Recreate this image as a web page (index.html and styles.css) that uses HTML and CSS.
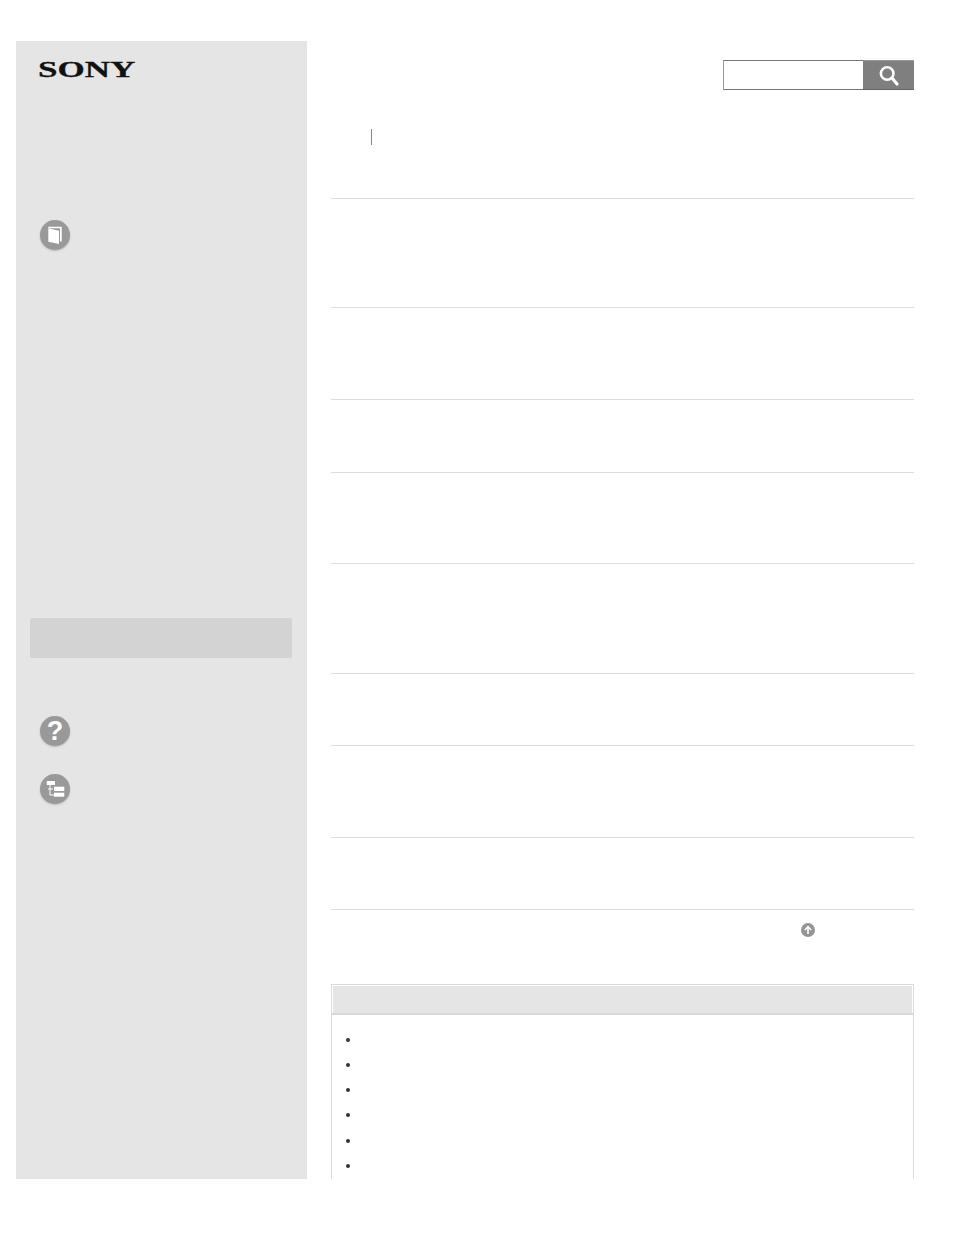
FILE: index.html
```html
<!DOCTYPE html>
<html lang="en">
<head>
<meta charset="utf-8">
<title>Sony Help Guide</title>
<link rel="stylesheet" href="styles.css">
</head>
<body>
<div class="page">
  <aside class="sidebar">
    <div class="logo"><span class="logo-text">SONY</span></div>
    <div class="icon icon-book">
      <svg width="30" height="30" viewBox="0 0 30 30">
        <path class="white" d="M8.3 6.7 H21.7 V21.5 H20 V8.2 H8.3 Z"/>
        <path class="white" d="M8.3 8.3 L19 10.7 V24 L8.3 21.7 Z"/>
      </svg>
    </div>
    <div class="highlight"></div>
    <div class="icon icon-help"><span class="qmark">?</span></div>
    <div class="icon icon-tree">
      <svg width="30" height="30" viewBox="0 0 30 30">
        <rect class="white" x="6.7" y="7" width="8.3" height="4"/>
        <path class="line" d="M10 11 V21 H14 M8 15 H13"/>
        <rect class="white" x="14" y="12.7" width="10.3" height="4.3"/>
        <rect class="white" x="14" y="18.7" width="10.3" height="4"/>
      </svg>
    </div>
  </aside>
  <main class="content">
    <div class="search">
      <div class="search-input"></div>
      <div class="search-btn">
        <svg width="24" height="24" viewBox="0 0 24 24">
          <circle class="lens" cx="10.2" cy="10.5" r="6.3"/>
          <path class="handle" d="M15 15 L20 21"/>
        </svg>
      </div>
    </div>
    <div class="crumbs"><span class="crumb-sep"></span></div>
    <div class="rows">
      <div class="row r109"></div>
      <div class="row r92"></div>
      <div class="row r73"></div>
      <div class="row r91"></div>
      <div class="row r110"></div>
      <div class="row r72"></div>
      <div class="row r92"></div>
      <div class="row r72"></div>
    </div>
    <div class="top-link">
      <svg width="14" height="14" viewBox="0 0 14 14">
        <circle class="top-circle" cx="7" cy="7" r="7"/>
        <path class="top-arrow" d="M7 11 V4 M3.8 7 L7 3.6 L10.2 7"/>
      </svg>
    </div>
    <section class="panel">
      <div class="panel-head"></div>
      <ul class="panel-list">
        <li></li><li></li><li></li><li></li><li></li><li></li><li></li>
      </ul>
    </section>
  </main>
</div>
</body>
</html>
```
FILE: styles.css
```css
* { box-sizing: border-box; }
html, body { margin: 0; padding: 0; background: #fff; }
body { padding: 41px 40px 0 16px; height: 1235px; overflow: hidden; }
.page { display: flex; gap: 24px; height: 1138px; overflow: hidden; }
.sidebar { width: 291px; flex: none; background: #e5e5e5; padding: 0 15px 0 14px; }
.logo { height: 179px; padding: 14px 0 0 9px; }
.logo-text {
  display: inline-block;
  margin-left: -1px;
  font: bold 24px/28px "Liberation Serif", serif;
  color: #111;
  -webkit-text-stroke: 0.3px #111;
  transform: scaleX(1.46);
  transform-origin: left center;
}
.icon {
  width: 30px; height: 30px; margin-left: 10px; border-radius: 50%;
  background: #999; box-shadow: 0 1px 2px rgba(0,0,0,.2);
  display: flex; align-items: center; justify-content: center;
}
.white { fill: #fff; }
.line { fill: none; stroke: #fff; stroke-width: 1; }
.icon-book { margin-bottom: 368px; }
.highlight { height: 40px; background: #d3d3d3; border-radius: 2px; margin-bottom: 58px; }
.icon-help { margin-bottom: 28px; }
.qmark { font: bold 27px/30px "Liberation Sans", sans-serif; color: #fff; }
.content { width: 583px; flex: none; }
.search { display: flex; width: 191px; height: 30px; margin: 19px 0 0 392px; }
.search-input { width: 140px; background: #fff; border: 1px solid #777; border-right: 0; border-left-color: #999; }
.search-btn {
  width: 51px; background: #7f7f7f; border-top: 1px solid #999; border-bottom: 1px solid #666;
  display: flex; align-items: center; justify-content: center;
}
.lens { fill: none; stroke: #fff; stroke-width: 2.6; }
.handle { fill: none; stroke: #fff; stroke-width: 3.2; stroke-linecap: round; }
.crumbs { height: 109px; padding: 39px 0 0 40px; border-bottom: 1px solid #ddd; }
.crumb-sep { display: block; width: 1px; height: 16px; background: #888; }
.row { border-bottom: 1px solid #ddd; }
.r109 { height: 109px; }
.r92 { height: 92px; }
.r73 { height: 73px; }
.r91 { height: 91px; }
.r110 { height: 110px; }
.r72 { height: 72px; }
.top-link { height: 75px; padding: 13px 0 0 470px; }
.top-link svg { display: block; }
.top-circle { fill: #959595; }
.top-arrow { fill: none; stroke: #fff; stroke-width: 1.6; }
.panel { border: 1px solid #dcdcdc; border-bottom: 0; padding: 1px 0 0; margin-top: -1px; }
.panel-head { height: 27px; margin: 0 1px; background: #e5e5e5; }
.panel-list { list-style: none; margin: 0; padding: 12px 0 0; border-top: 2px solid #d9d9d9; }
.panel-list li { height: 25.25px; padding-left: 14px; display: flex; align-items: center; }
.panel-list li::before { content: ""; width: 4px; height: 4px; border-radius: 50%; background: #333; }
```
